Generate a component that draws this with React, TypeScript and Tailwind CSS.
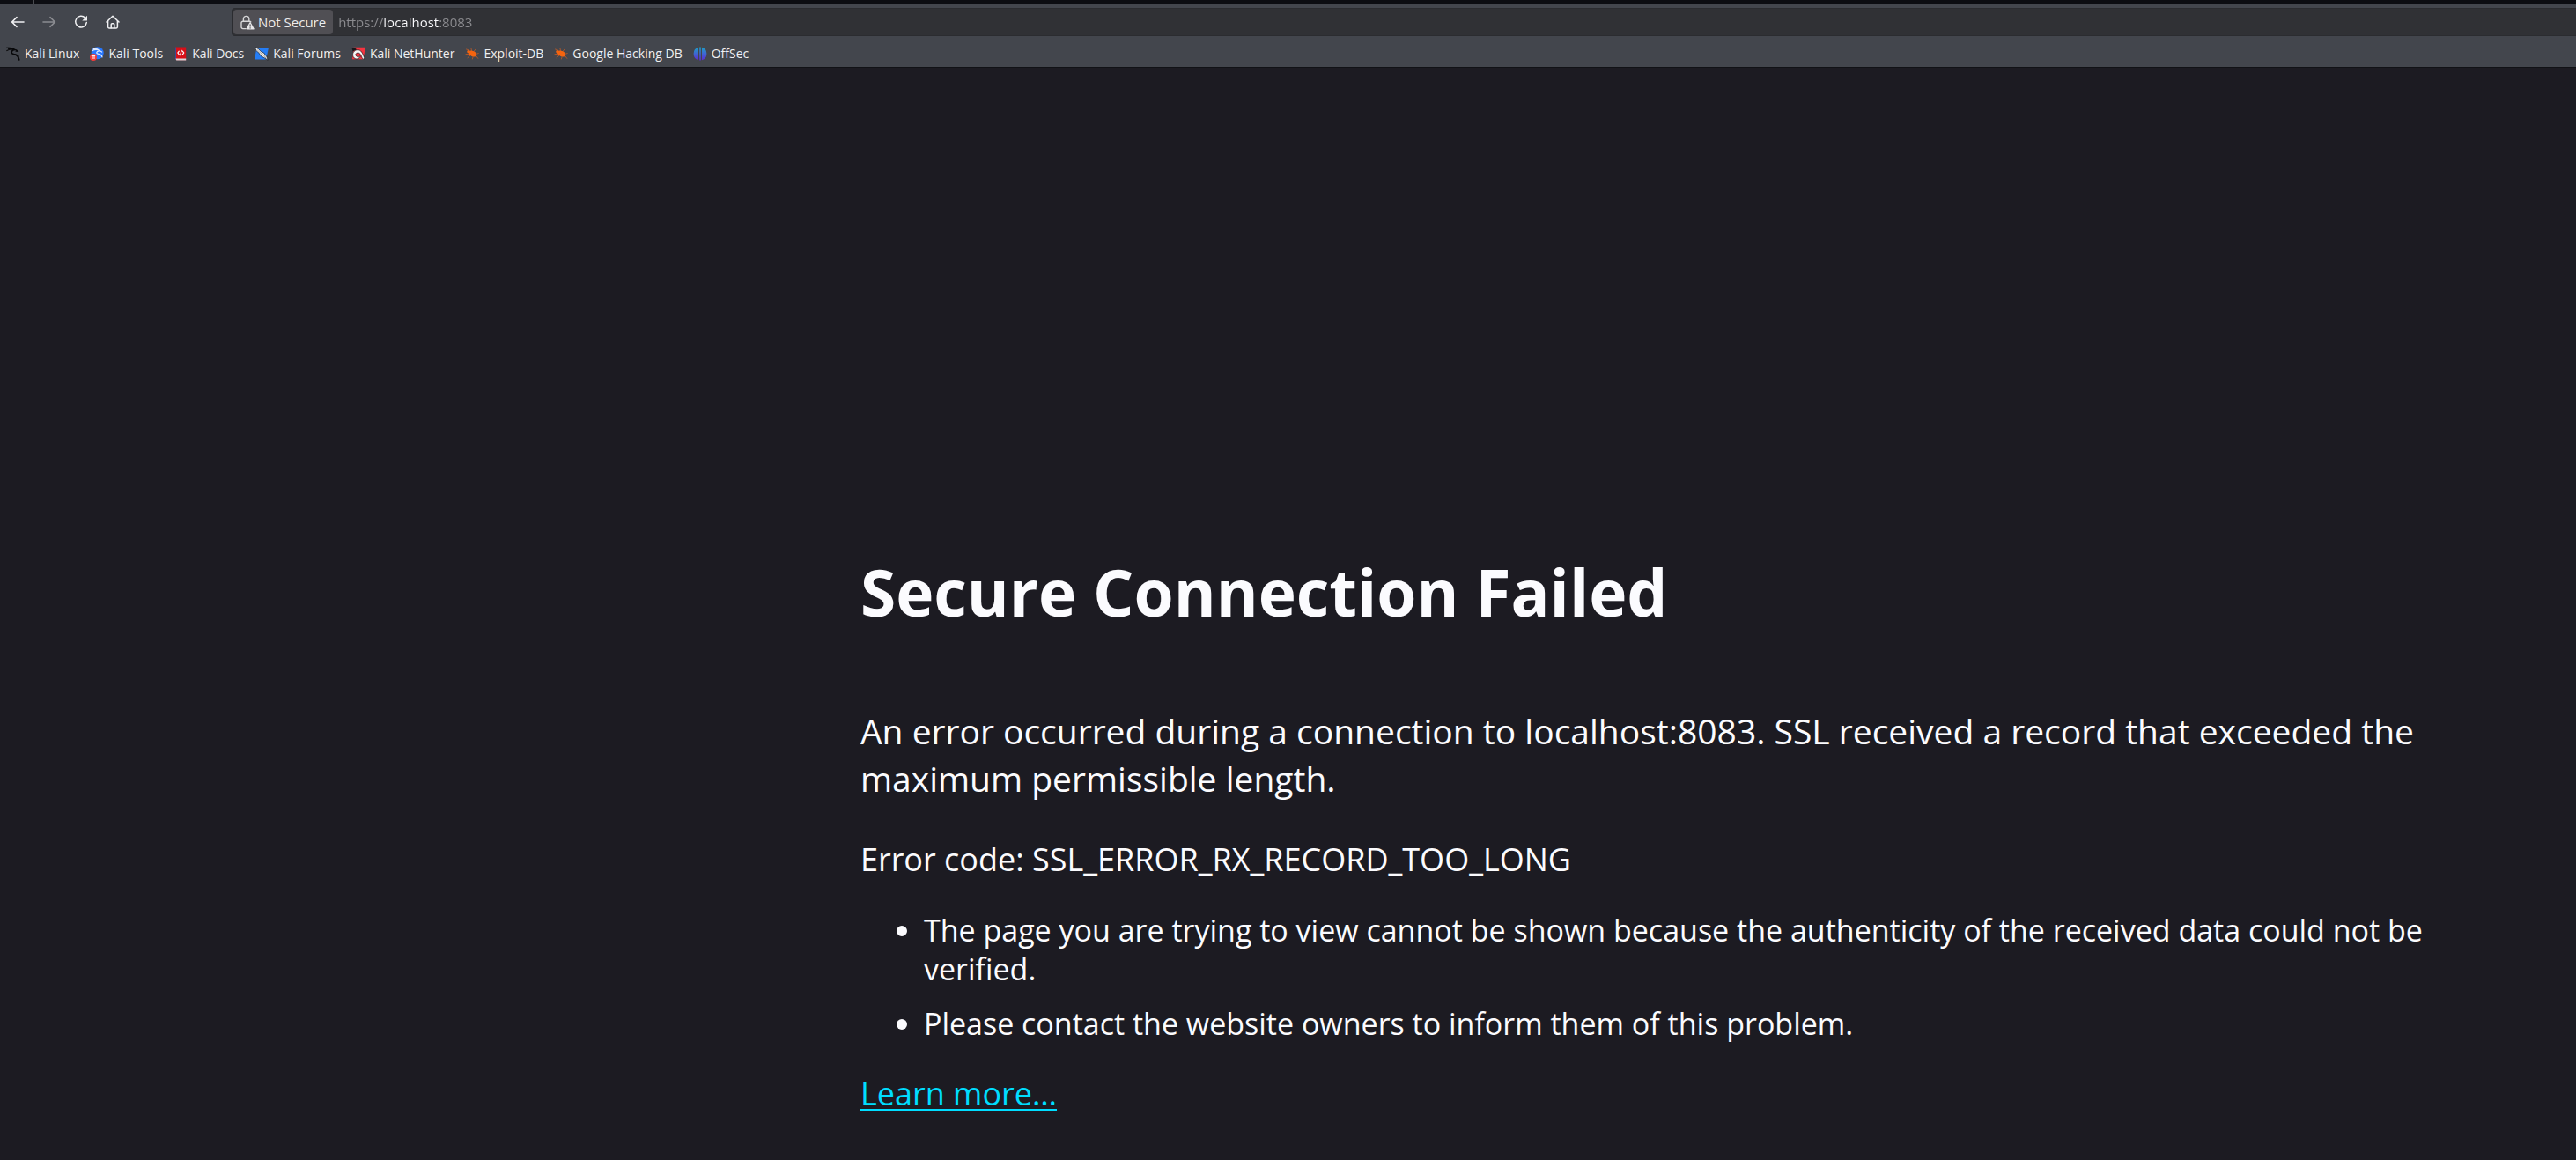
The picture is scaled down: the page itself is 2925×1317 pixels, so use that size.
import type { ReactNode } from "react";

function BackIcon() {
  return (
    <svg viewBox="0 0 16 16" className="size-4" fill="none" stroke="currentColor" strokeWidth="1.6" strokeLinecap="round" strokeLinejoin="round" aria-hidden="true">
      <path d="M15 8H2M7 2.6 1.6 8 7 13.4" />
    </svg>
  );
}

function ForwardIcon() {
  return (
    <svg viewBox="0 0 16 16" className="size-4" fill="none" stroke="currentColor" strokeWidth="1.6" strokeLinecap="round" strokeLinejoin="round" aria-hidden="true">
      <path d="M1 8h13M9 2.6 14.4 8 9 13.4" />
    </svg>
  );
}

function ReloadIcon() {
  return (
    <svg viewBox="0 0 16 16" className="size-4" aria-hidden="true">
      <path d="M12.6 3.2A6.3 6.3 0 1 0 14.3 8.6" fill="none" stroke="currentColor" strokeWidth="1.5" strokeLinecap="round" />
      <path d="M15 .8v5.1a.6.6 0 0 1-.6.6H9.3z" fill="currentColor" />
    </svg>
  );
}

function HomeIcon() {
  return (
    <svg viewBox="0 0 16 16" className="size-4" fill="none" stroke="currentColor" strokeWidth="1.5" strokeLinecap="round" strokeLinejoin="round" aria-hidden="true">
      <path d="M1 8 8 1.2 15 8" />
      <path d="M2.6 7v6.600c0 .8.5 1.400 1.300 1.400h8.200c.8 0 1.300-.6 1.300-1.400V7" />
      <path d="M6.200 14.800v-4c0-.7.4-1.100 1-1.100h1.600c.6 0 1 .4 1 1.100v4" />
    </svg>
  );
}

function LockWarningIcon() {
  return (
    <svg viewBox="0 0 16 17" className="h-[17px] w-4" aria-hidden="true">
      <path d="M3.400 7V4.600a3.200 3.200 0 0 1 6.400 0V7" fill="none" stroke="#d6d6d8" strokeWidth="1.4" />
      <path d="M6 15.600H2.800A1.800 1.800 0 0 1 1 13.800V9a1.800 1.800 0 0 1 1.800-1.800h7.400A1.800 1.800 0 0 1 11.800 8" fill="none" stroke="#d6d6d8" strokeWidth="1.4" strokeLinecap="round" />
      <path d="M10.400 8.600 6.600 15.400a.7.7 0 0 0 .6 1h7.800a.7.7 0 0 0 .6-1l-3.900-6.800a.75.75 0 0 0-1.300 0z" fill="#e6e6e8" />
      <path d="M11.100 10.600v2.900M11.100 14.300v1.200" stroke="#504f54" strokeWidth="1.2" />
    </svg>
  );
}

function KaliLinuxIcon() {
  return (
    <svg viewBox="0 0 16 16" className="size-4" fill="none" stroke="#08080a" strokeLinecap="round" strokeLinejoin="round" aria-hidden="true">
      <path d="M.4 1.200C3.500.8 6.500 1.300 9.200 3" strokeWidth="1" />
      <path d="M.8 4.600C3.600 3 6.400 2.700 9 3.400" strokeWidth="1.1" />
      <path d="M2.800 2.500c2.200-.4 4.400.1 6.400 1.100" strokeWidth="1.5" />
      <path d="M9 3.200c1.600.2 3.200.8 4.600 2.300l-2.500-.3" strokeWidth="1.2" />
      <path d="M8.800 3.600C5.400 5 5.200 8 8.600 8.600c3.600.5 5.400 2 6.200 6.400" strokeWidth="1.6" />
      <path d="M10 8.800c2 0 3.600 1 4.200 2.200" strokeWidth="1.2" />
    </svg>
  );
}

function KaliToolsIcon() {
  return (
    <svg viewBox="0 0 16 16" className="size-4" aria-hidden="true">
      <circle cx="8.7" cy="7.2" r="7" fill="#2777ff" />
      <path d="M2.500 4.800c3-1.600 6.300-1.600 8.600-.2M4.200 2.600c2.600-.5 5 .2 6.900 2l2.500 1.500M10.800 4.800C7 5.400 6.800 8 10 8.400c2.300.3 3.600 1.600 4 3.400" fill="none" stroke="#dbe8ff" strokeWidth="1.2" strokeLinecap="round" />
      <circle cx="4" cy="12" r="4" fill="#f03a3a" />
      <path d="M1.800 10.400h4.400M3 10.400v3.600M5 10.400v3.600" stroke="#fff" strokeWidth="1" />
    </svg>
  );
}

function KaliDocsIcon() {
  return (
    <svg viewBox="0 0 16 16" className="size-4" aria-hidden="true">
      <path d="M2.400.4h11.800v14.800H3.600A1.600 1.600 0 0 1 2 13.600V1z" fill="#d80f18" />
      <path d="M2 1v12.600c0 .6.4 1.100.9 1.300V.6z" fill="#2b50a8" />
      <path d="M2.600 13.600h11.600v1.800H3.200z" fill="#d9dadd" />
      <path d="M6.300 5.200 4.900 7l1.400 1.800M10.300 5.200 11.700 7l-1.400 1.800M9.200 4.400 7.500 9.600" fill="none" stroke="#fff" strokeWidth="1.2" strokeLinecap="round" />
    </svg>
  );
}

function KaliForumsIcon() {
  return (
    <svg viewBox="0 0 16 16" className="size-4" aria-hidden="true">
      <path d="M2.500 1H16l-2.800 13.500H0z" fill="#257df5" />
      <path d="M.6.8 4 2.200l3.500 3.600 3 1.200 3.700 5 .9 3.300-3.800-2.500L7 10.400 5.400 7.600 1.800 4.400z" fill="#f4f4f4" stroke="#16181c" strokeWidth=".7" />
      <path d="M2.800 3.300 6.500 7l3.800 2.600 3 3.800" fill="none" stroke="#444" strokeWidth=".5" />
    </svg>
  );
}

function KaliNetHunterIcon() {
  return (
    <svg viewBox="0 0 16 16" className="size-4" aria-hidden="true">
      <path d="M2.600.8H16l-2.600 13.400H1z" fill="#f5333f" />
      <path d="M.4 1.200c2.400 0 4.400.6 5.600 2L1.600 5.600z" fill="#17181b" />
      <path d="M2.200 11.800C.3 7.800 3 3.700 7 3.700c4.100 0 5.400 3 7.800 9.200l-1 1.600-1.700-1.800C10.600 8.600 9.400 6.900 7 7.100c-2 .2-2.700 2-1.800 3.300 1.200 1.600 3.100 1.200 5 .4-.6 3-5.600 4.700-8 1z" fill="#f5f5f5" stroke="#17181b" strokeWidth=".7" />
    </svg>
  );
}

function ExploitBugIcon() {
  return (
    <svg viewBox="0 0 16 16" className="size-4" fill="none" stroke="#c45a24" strokeLinecap="round" aria-hidden="true">
      <path d="M4.500 4 1.500 3M7.500 4.600 7 2.200M10 5.500l2-2.500M12.500 8.400l2.700-.8M4.400 8.400 1 8.600M5.800 10.200 3 12.600M9 12l-.6 2M13 11l1.800 2.400" strokeWidth=".8" />
      <ellipse cx="8.6" cy="8" rx="5" ry="3.1" transform="rotate(28 8.6 8)" fill="#f5640f" stroke="none" />
      <circle cx="3.9" cy="5.7" r="1.7" fill="#f5640f" stroke="none" />
    </svg>
  );
}

function OffSecIcon() {
  return (
    <svg viewBox="0 0 16 16" className="size-4" aria-hidden="true">
      <defs>
        <linearGradient id="offsec" x1="0" y1="0" x2="0" y2="1">
          <stop offset="0" stopColor="#1aa3c4" />
          <stop offset=".5" stopColor="#3f66d2" />
          <stop offset="1" stopColor="#5b2bd0" />
        </linearGradient>
      </defs>
      <path d="M6 .8v14.400A7.500 7.500 0 0 1 6 .8zM7.200.4h1.600v15.200H7.200zM10 .8a7.500 7.500 0 0 1 0 14.400z" fill="url(#offsec)" />
    </svg>
  );
}

const bookmarks: { label: string; icon: ReactNode }[] = [
  { label: "Kali Linux", icon: <KaliLinuxIcon /> },
  { label: "Kali Tools", icon: <KaliToolsIcon /> },
  { label: "Kali Docs", icon: <KaliDocsIcon /> },
  { label: "Kali Forums", icon: <KaliForumsIcon /> },
  { label: "Kali NetHunter", icon: <KaliNetHunterIcon /> },
  { label: "Exploit-DB", icon: <ExploitBugIcon /> },
  { label: "Google Hacking DB", icon: <ExploitBugIcon /> },
  { label: "OffSec", icon: <OffSecIcon /> },
];

function NavButton({ label, disabled, children }: { label: string; disabled?: boolean; children: ReactNode }) {
  return (
    <button type="button" aria-label={label} disabled={disabled} className="flex size-8 items-center justify-center rounded text-[#f0f0f2] disabled:text-[#8b8c91]">
      {children}
    </button>
  );
}

function Toolbar() {
  return (
    <div className="flex items-center pt-1">
      <nav aria-label="Navigation" className="flex w-[263px] shrink-0 items-center gap-1 pl-1">
        <NavButton label="Back"><BackIcon /></NavButton>
        <NavButton label="Forward" disabled><ForwardIcon /></NavButton>
        <NavButton label="Reload"><ReloadIcon /></NavButton>
        <NavButton label="Home"><HomeIcon /></NavButton>
      </nav>
      <div className="flex h-8 grow items-center rounded-l border border-r-0 border-[#2b2c30] bg-[#303135] pl-px text-[15px]">
        <button type="button" className="flex h-7 shrink-0 items-center gap-1 rounded-sm bg-[#504f54] px-2 text-[#ececee]">
          <LockWarningIcon />
          Not Secure
        </button>
        <input
          type="text"
          aria-label="Address"
          defaultValue="https://localhost:8083"
          className="ml-1.5 h-7 min-w-0 grow bg-[linear-gradient(90deg,#8c8c90_52px,#fbfbfe_52px,#fbfbfe_115px,#8c8c90_115px)] bg-clip-text text-transparent caret-white outline-none"
        />
      </div>
    </div>
  );
}

export default function App() {
  return (
    <div className="flex min-h-screen flex-col bg-[#1c1b22] font-['Open_Sans','Noto_Sans',sans-serif] text-[#fbfbfe]">
      <header className="border-b border-[#111216] bg-[#43464d]">
        <div className="h-[5px] bg-[#0c0d12] pl-[38px]">
          <div className="h-1 w-px bg-[#4a4b50]" />
        </div>
        <Toolbar />
        <nav aria-label="Bookmarks" className="flex h-[35px] items-center gap-3 pt-1 pl-[7px] text-[14px] leading-5">
          {bookmarks.map((b) => (
            <a key={b.label} href="#" className="flex items-center gap-[5px] whitespace-nowrap text-[#f0f0f2]">
              {b.icon}
              {b.label}
            </a>
          ))}
        </nav>
      </header>
      <main className="grow pt-[551px] pr-[5%] pb-12 pl-[33.4%] text-[36px] leading-[44px]">
        <h1 className="text-[73px] leading-[88px] font-bold">Secure Connection Failed</h1>
        <p className="mt-[87px] text-[39px] leading-[54px]">
          An error occurred during a connection to localhost:8083. SSL received a record that exceeded the maximum permissible length.
        </p>
        <p className="mt-[43px]">Error code: SSL_ERROR_RX_RECORD_TOO_LONG</p>
        <ul className="mt-9 flex list-disc flex-col gap-[18px] pl-[72px] text-[34px]">
          <li>The page you are trying to view cannot be shown because the authenticity of the received data could not be verified.</li>
          <li>Please contact the website owners to inform them of this problem.</li>
        </ul>
        <p className="mt-9">
          <a href="#" className="text-[#00ddff] underline decoration-2 underline-offset-4">Learn more…</a>
        </p>
      </main>
    </div>
  );
}
